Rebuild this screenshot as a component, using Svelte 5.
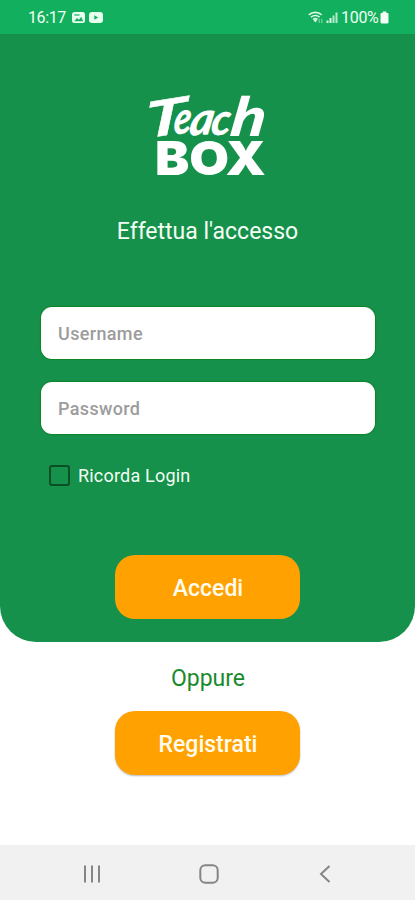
<script>
  let username = $state('');
  let password = $state('');
  let remember = $state(false);
</script>

<div class="screen">
  <header class="status">
    <span class="clock">16:17</span>
    <svg class="notices" width="32" height="14" viewBox="0 0 32 14">
      <rect x="0" y="1" width="13" height="11" rx="2.5" fill="#e9fff0" />
      <path d="M2.2 10.300 5 7l2 1.700 2.200-3 2 4.600z" fill="#12b05e" />
      <path d="M2.300 3.400h5.200v1.200H2.300z" fill="#12b05e" />
      <rect x="17" y="1" width="14" height="11" rx="3.200" fill="#e9fff0" />
      <path d="M22.300 4.300v4.400l3.800-2.200z" fill="#12b05e" />
    </svg>
    <svg class="signal" width="32" height="14" viewBox="0 0 32 14" fill="none" stroke="#dcf9e6">
      <path d="M.8 3.800c3.700-3.200 9.200-3.200 12.900 0M3 6.200c2.600-2 6-2 8.600 0M5.200 8.400c1.300-1 3-1 4.200 0" stroke-width="1.600" />
      <path d="M5 8.500h4.600l-2.300 3z" fill="#dcf9e6" stroke="none" />
      <path d="M11.200 8v4M13.800 8v4" stroke-width="1" opacity=".6" />
      <path d="M19.500 12V9.500M22.500 12V7" stroke-width="2" />
      <path d="M25.500 12V4.500M28.500 12V1.500" stroke-width="2" opacity=".8" />
    </svg>
    <span class="charge">100%</span>
    <svg width="9" height="14" viewBox="0 0 9 14" fill="#f3fff6">
      <path d="M2.700 .5h3.600V2h1.200q1 0 1 1v8q0 1.500-1.500 1.500H2q-1.500 0-1.500-1.500V3q0-1 1-1h1.200z" />
    </svg>
  </header>

  <main class="panel">
    <svg class="logo" width="136" height="110" viewBox="140 82 136 110" fill="#fff" role="img" aria-label="Teach BOX">
      <g class="script">
        <text class="initial" transform="translate(142 139) rotate(-9) skewX(-21)" font-size="49" textLength="41" lengthAdjust="spacingAndGlyphs">T</text>
        <text transform="translate(173 135) rotate(-8) skewX(-12)" font-size="44" textLength="18" lengthAdjust="spacingAndGlyphs">e</text>
        <text transform="translate(188 136) rotate(-4) skewX(-14)" font-size="46" textLength="24" lengthAdjust="spacingAndGlyphs">a</text>
        <text transform="translate(210 136) rotate(-6) skewX(-12)" font-size="43" textLength="20" lengthAdjust="spacingAndGlyphs">c</text>
        <text transform="translate(229 135.500) skewX(-8)" font-size="54" textLength="35" lengthAdjust="spacingAndGlyphs">h</text>
      </g>
      <text class="block" x="155" y="175" font-size="47" textLength="111" lengthAdjust="spacingAndGlyphs">BOX</text>
    </svg>
    <h1>Effettua l'accesso</h1>
    <input class="field" type="text" placeholder="Username" bind:value={username} />
    <input class="field" type="password" placeholder="Password" bind:value={password} />
    <label class="remember">
      <input type="checkbox" bind:checked={remember} />
      <span>Ricorda Login</span>
    </label>
    <button class="action">Accedi</button>
  </main>

  <section class="signup">
    <p>Oppure</p>
    <button class="action raised">Registrati</button>
  </section>

  <nav>
    <svg width="20" height="20" viewBox="0 0 20 20" stroke="#858585" stroke-width="2"><path d="M3 1.500v17M10 1.500v17M17 1.500v17" /></svg>
    <svg width="20" height="20" viewBox="0 0 20 20" fill="none" stroke="#858585" stroke-width="2"><rect x="1.300" y="1.300" width="17.400" height="17.400" rx="5" /></svg>
    <svg width="20" height="20" viewBox="0 0 20 20" fill="none" stroke="#858585" stroke-width="2"><path d="M14.500 2 6 10l8.500 8" /></svg>
  </nav>
</div>

<style>
  :global(body) { margin: 0; }
  .screen {
    width: 415px;
    height: 900px;
    display: flex;
    flex-direction: column;
    background: #fff;
    font-family: Roboto, "Liberation Sans", sans-serif;
    overflow: hidden;
  }
  .status {
    box-sizing: border-box;
    height: 34px;
    flex: none;
    padding: 1px 26px 0 28px;
    display: flex;
    align-items: center;
    background: #12b05e;
    color: #effff4;
    font-size: 16px;
  }
  .clock { width: 38px; margin-right: 6px; letter-spacing: -.4px; }
  .signal { margin-left: auto; margin-right: 1px; }
  .charge { width: 39px; margin-right: 0; letter-spacing: -.3px; }
  .panel {
    box-sizing: border-box;
    height: 608px;
    flex: none;
    padding: 48px 40px 0;
    display: flex;
    flex-direction: column;
    align-items: center;
    background: #16914b;
    border-radius: 0 0 36px 36px;
  }
  .logo { flex: none; overflow: visible; }
  .script { font-family: Lato, sans-serif; font-weight: 900; font-style: italic; }
  .initial { font-weight: 700; font-style: normal; stroke: #fff; stroke-width: .5px; }
  .block { font-family: Inter, "Open Sans", sans-serif; font-weight: 900; }
  h1 {
    margin: 25px 0 60px;
    font-size: 23px;
    line-height: 30px;
    font-weight: 400;
    color: #f4fff4;
    white-space: nowrap;
  }
  .field {
    box-sizing: border-box;
    width: 334px;
    height: 52px;
    flex: none;
    margin: 0 0 23px 1px;
    padding: 1px 17px 0;
    border: 0;
    border-radius: 11px;
    background: #fff;
    box-shadow: 0 0 1px 1px #0d8426;
    font: 500 18px Roboto, sans-serif;
    letter-spacing: .35px;
    color: #444;
    outline: 0;
  }
  .field::placeholder { color: #9c9c9c; opacity: 1; }
  .remember {
    align-self: flex-start;
    display: flex;
    align-items: center;
    gap: 8px;
    height: 22px;
    margin: 7px 0 0 9px;
    color: #f2fff2;
    font-size: 18px;
    letter-spacing: .2px;
  }
  .remember input {
    appearance: none;
    box-sizing: border-box;
    width: 21px;
    height: 21px;
    margin: 0;
    border: 2px solid #0a4f25;
    border-radius: 3px;
  }
  .remember input:checked { background: #0a4f25; }
  .action {
    width: 185px;
    height: 64px;
    flex: none;
    padding: 2px 0 0 1px;
    border: 0;
    border-radius: 20px;
    background: #ffa201;
    color: #fffbed;
    font: 500 23px Roboto, sans-serif;
  }
  .panel .action { margin-top: 69px; }
  .signup {
    flex: 1;
    display: flex;
    flex-direction: column;
    align-items: center;
  }
  .signup p {
    margin: 22px 0 17px 1px;
    font-size: 23px;
    line-height: 30px;
    color: #188a2b;
  }
  .raised { box-shadow: 0 1px 2px rgb(0 0 0 / .28); }
  nav {
    box-sizing: border-box;
    height: 55px;
    flex: none;
    display: flex;
    align-items: center;
    justify-content: space-between;
    padding: 3px 80px 0 82px;
    background: #f1f1f1;
  }
</style>
